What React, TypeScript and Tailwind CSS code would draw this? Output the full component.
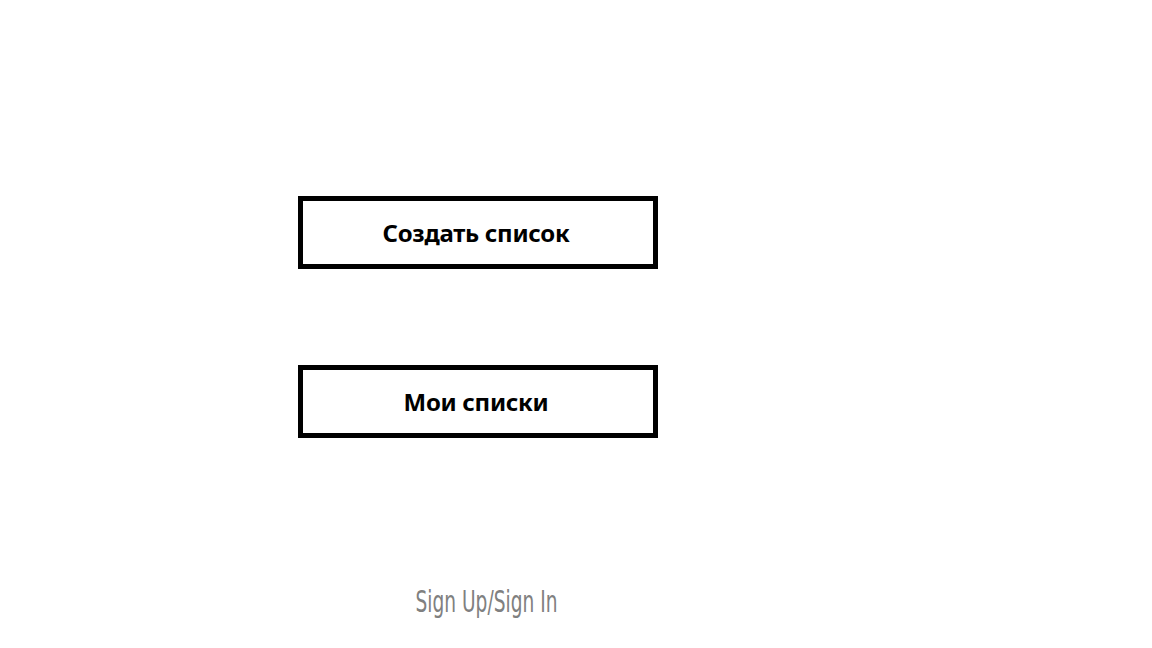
import React from 'react';

const MenuButton: React.FC<{ label: string }> = ({ label }) => (
  <button className="flex h-[73px] w-[360px] items-center justify-center border-[5px] border-black bg-white pr-[4px] text-[24px] font-bold tracking-[-0.3px] text-black [font-family:'Noto_Sans',sans-serif]">
    {label}
  </button>
);

export default function App() {
  return (
    <div className="min-h-[648px] w-full bg-white">
      <div className="ml-[298px] flex w-[360px] flex-col items-center pt-[196px]">
        <MenuButton label="Создать список" />
        <div className="mt-[96px]">
          <MenuButton label="Мои списки" />
        </div>
        <a
          href="#"
          className="ml-[16px] mt-[149px] origin-center scale-x-[0.62] text-[30px] leading-none text-[#808080] [font-family:'DejaVu_Sans',sans-serif]"
        >
          Sign Up/Sign In
        </a>
      </div>
    </div>
  );
}
